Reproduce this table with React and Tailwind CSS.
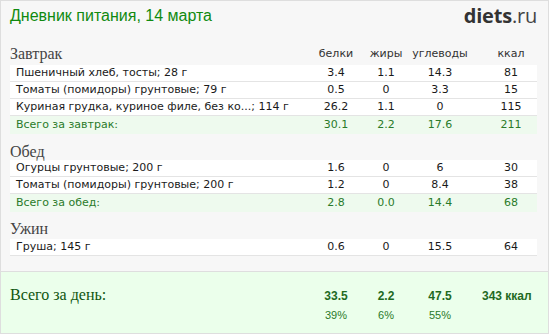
import React from "react";

const sans = { fontFamily: '"DejaVu Sans", Verdana, sans-serif' };

const breakfast = [
  ["Пшеничный хлеб, тосты; 28 г", "3.4", "1.1", "14.3", "81"],
  ["Томаты (помидоры) грунтовые; 79 г", "0.5", "0", "3.3", "15"],
  ["Куриная грудка, куриное филе, без ко...; 114 г", "26.2", "1.1", "0", "115"],
];
const lunch = [
  ["Огурцы грунтовые; 200 г", "1.6", "0", "6", "30"],
  ["Томаты (помидоры) грунтовые; 200 г", "1.2", "0", "8.4", "38"],
];
const dinner = [["Груша; 145 г", "0.6", "0", "15.5", "64"]];

function Cols({ v, className = "" }) {
  return (
    <>
      <div className={`w-[50px] text-center ${className}`}>{v[0]}</div>
      <div className={`w-[50px] text-center ${className}`}>{v[1]}</div>
      <div className={`w-[58px] text-center ${className}`}>{v[2]}</div>
      <div className={`w-[68px] pl-[16px] text-center ${className}`}>{v[3]}</div>
    </>
  );
}

function Row({ r }) {
  return (
    <div className="flex h-[17px] bg-white border-b border-[#e4e4e4] text-[11px] leading-[16px] text-[#1a1a1a] font-['DejaVu_Sans',sans-serif]">
      <div className="flex-1 pl-[6px] whitespace-nowrap">{r[0]}</div>
      <Cols v={r.slice(1)} />
    </div>
  );
}

function Total({ label, v }) {
  return (
    <div className="flex h-[18px] bg-[#eefaee] text-[11px] leading-[18px] text-[#2a7a2a] font-['DejaVu_Sans',sans-serif]">
      <div className="flex-1 pl-[6px]">{label}</div>
      <Cols v={v} />
    </div>
  );
}

function Heading({ title, h, pb, cols }) {
  return (
    <div className={`flex ${h}`}>
      <div className={`flex-1 self-end ${pb} text-[16px] leading-[16px] text-[#444] font-['Liberation_Serif',serif]`}>
        {title}
      </div>
      {cols && (
        <div className="flex self-start pt-[1px] text-[11px] leading-[17px] text-[#333] font-['DejaVu_Sans',sans-serif]">
          <Cols v={["белки", "жиры", "углеводы", "ккал"]} />
        </div>
      )}
    </div>
  );
}

export default function App() {
  return (
    <div className="w-[549px] h-[334px] bg-[#f7f7f7] border border-[#dedede] flex flex-col overflow-hidden">
      <div className="flex justify-between items-start h-[43px] pl-[9px] pr-[11px]">
        <div className="mt-[6px] text-[16px] leading-[18px] text-[#108a10] font-['Liberation_Sans',Arial,sans-serif]">
          Дневник питания, 14 марта
        </div>
        <div className="mt-[5px] text-[20px] leading-[20px] text-[#333] font-['Open_Sans',sans-serif] tracking-[-0.2px]">
          <span className="font-bold">diets</span>
          <span className="text-[#444]">.ru</span>
        </div>
      </div>
      <div className="pl-[9px] pr-[11px]">
        <Heading title="Завтрак" h="h-[21px]" pb="pb-[3px]" cols />
        {breakfast.map((r, i) => (
          <Row key={i} r={r} />
        ))}
        <Total label="Всего за завтрак:" v={["30.1", "2.2", "17.6", "211"]} />
        <Heading title="Обед" h="h-[26px]" pb="pb-0" />
        {lunch.map((r, i) => (
          <Row key={i} r={r} />
        ))}
        <Total label="Всего за обед:" v={["2.8", "0.0", "14.4", "68"]} />
        <Heading title="Ужин" h="h-[27px]" pb="pb-[2px]" />
        {dinner.map((r, i) => (
          <Row key={i} r={r} />
        ))}
      </div>
      <div className="mt-[15px] flex-1 bg-[#ebffeb] border-t border-[#dedede] pl-[9px] pr-[11px] pt-[15px]">
        <div className="flex items-baseline text-[12px] leading-[16px] font-bold text-[#1f6a1f] font-['Liberation_Sans',Arial,sans-serif]">
          <div className="flex-1 text-[16px] font-normal text-[#0f560f] font-['Liberation_Serif',serif]">
            Всего за день:
          </div>
          <div className="w-[50px] text-center">33.5</div>
          <div className="w-[50px] text-center">2.2</div>
          <div className="w-[58px] text-center">47.5</div>
          <div className="w-[68px] pl-[13px] text-left whitespace-nowrap">343 ккал</div>
        </div>
        <div className="flex mt-[3px] text-[11px] leading-[16px] text-[#2a7a2a] font-['Liberation_Sans',Arial,sans-serif]">
          <div className="flex-1" />
          <div className="w-[50px] text-center">39%</div>
          <div className="w-[50px] text-center">6%</div>
          <div className="w-[58px] text-center">55%</div>
          <div className="w-[68px]" />
        </div>
      </div>
    </div>
  );
}
